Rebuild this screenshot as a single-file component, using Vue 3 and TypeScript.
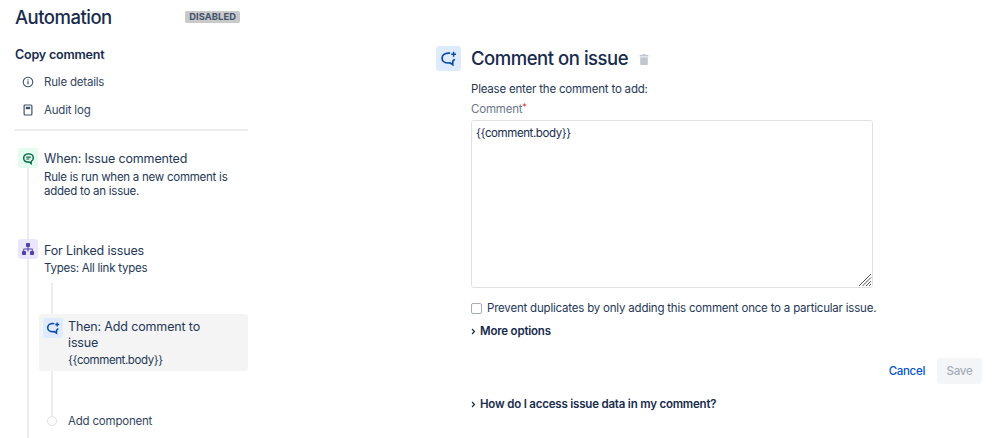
<script setup lang="ts">
const navItems = [
  { label: 'Rule details', icon: 'info' },
  { label: 'Audit log', icon: 'log' },
]
const bodyToken = '{{comment.body}\u007d'
</script>

<template>
  <div class="page">
    <aside class="sidebar">
      <div class="title-row">
        <h1>Automation</h1>
        <span class="lozenge">DISABLED</span>
      </div>
      <h2>Copy comment</h2>
      <ul class="nav">
        <li v-for="item in navItems" :key="item.label">
          <svg v-if="item.icon === 'info'" width="12" height="12" viewBox="0 0 12 12">
            <circle cx="6" cy="6" r="4.8" fill="none" stroke="#42526e" stroke-width="1.1" />
            <rect x="5.4" y="5.2" width="1.2" height="3.2" fill="#42526e" />
            <rect x="5.4" y="3.3" width="1.2" height="1.2" fill="#42526e" />
          </svg>
          <svg v-else width="12" height="12" viewBox="0 0 12 12">
            <rect x="2.1" y="1" width="7.8" height="10" rx="1" fill="none" stroke="#42526e" stroke-width="1.2" />
            <rect x="3.8" y="2.8" width="4.4" height="2.4" fill="#42526e" />
          </svg>
          <span>{{ item.label }}</span>
        </li>
      </ul>
      <div class="divider"></div>

      <div class="steps">
        <div class="step step-when">
          <div class="step-icon green">
            <svg width="13" height="13" viewBox="0 0 14 14" fill="none">
              <path d="M7 2C3.9 2 1.8 3.9 1.8 6.4c0 2.5 2.1 4.3 5 4.3h.9l2.2 1.7v-2.3c1.500-.7 2.300-2 2.300-3.700C12.200 3.900 10.100 2 7 2z" stroke="#006644" stroke-width="1.500" />
              <path d="M4.600 5.500h4.800M4.600 7.500h3.400" stroke="#006644" stroke-width="1.200" />
            </svg>
          </div>
          <div>
            <div class="step-title">When: Issue commented</div>
            <div class="step-desc">Rule is run when a new comment is added to an issue.</div>
          </div>
        </div>

        <div class="step step-branch">
          <div class="step-icon purple">
            <svg width="14" height="14" viewBox="0 0 14 14" fill="#5243aa">
              <rect x="5" y="1" width="4" height="4" rx=".8" />
              <rect x="1" y="9" width="4" height="4" rx=".8" />
              <rect x="9" y="9" width="4" height="4" rx=".8" />
              <path d="M6.500 4.500h1v2h3.500a.8.8 0 0 1 .8.8v2h-1V7.500H7.500v2h-1v-2H3.200v2h-1V7.300a.8.8 0 0 1 .8-.8h3.500z" />
            </svg>
          </div>
          <div>
            <div class="step-title">For Linked issues</div>
            <div class="step-desc">Types: All link types</div>
          </div>
        </div>

        <div class="nested">
          <div class="card">
            <div class="step-icon blue">
              <svg width="14" height="14" viewBox="0 0 14 14" fill="none">
                <path d="M8.300 2.600C8 2.500 7.500 2.500 7 2.500c-3 0-5.300 1.700-5.300 4.200 0 2.400 2.200 4 5 4 .5 0 1 0 1.500-.1l2.300 1.500V9.300c.7-.5 1.200-1.100 1.400-1.900" stroke="#0747a6" stroke-width="1.500" />
                <path d="M11.200 1.500v4M9.200 3.500h4" stroke="#0747a6" stroke-width="1.300" />
              </svg>
            </div>
            <div class="card-body">
              <div class="step-title">Then: Add comment to issue</div>
              <div class="step-desc token">{{ bodyToken }}</div>
            </div>
          </div>
          <div class="add-row">
            <span class="add-dot"></span>
            <span class="add-label">Add component</span>
          </div>
        </div>
      </div>
    </aside>

    <main class="main">
      <div class="header">
        <div class="header-icon">
          <svg width="17" height="17" viewBox="0 0 14 14" fill="none">
            <path d="M8.300 2.600C8 2.500 7.500 2.500 7 2.500c-3 0-5.300 1.700-5.300 4.200 0 2.400 2.200 4 5 4 .5 0 1 0 1.500-.1l2.300 1.500V9.300c.7-.5 1.200-1.100 1.400-1.900" stroke="#0747a6" stroke-width="1.400" />
            <path d="M11.200 1.500v4M9.200 3.500h4" stroke="#0747a6" stroke-width="1.200" />
          </svg>
        </div>
        <h3>Comment on issue</h3>
        <svg class="trash" width="10" height="11" viewBox="0 0 10 11" fill="#c1c7d0">
          <rect x="0.500" y="1" width="9" height="1.600" rx=".5" />
          <rect x="3.500" y="0" width="3" height="1.500" />
          <path d="M1.200 3.200h7.600v7a.8.8 0 0 1-.8.8H2a.8.8 0 0 1-.8-.8z" />
        </svg>
      </div>

      <div class="form">
        <p class="hint">Please enter the comment to add:</p>
        <label class="field-label">Comment<span class="req">*</span></label>
        <div class="textarea">
          <span class="token">{{ bodyToken }}</span>
          <svg class="resizer" width="14" height="14" viewBox="0 0 14 14" stroke="#555" stroke-width="1" fill="none">
            <path d="M1 13L13 1M4.500 13L13 4.500M8 13l5-5M11 13l2-2" />
          </svg>
        </div>
        <div class="check-row">
          <span class="checkbox"></span>
          <span class="check-label">Prevent duplicates by only adding this comment once to a particular issue.</span>
        </div>
        <div class="toggle more">
          <svg width="5" height="7" viewBox="0 0 5 7" fill="none"><path d="M1 1l2.500 2.500L1 6" stroke="#172b4d" stroke-width="1.200" /></svg>
          <span>More options</span>
        </div>
      </div>

      <div class="actions">
        <span class="cancel">Cancel</span>
        <span class="save">Save</span>
      </div>

      <div class="toggle help">
        <svg width="5" height="7" viewBox="0 0 5 7" fill="none"><path d="M1 1l2.500 2.500L1 6" stroke="#172b4d" stroke-width="1.200" /></svg>
        <span>How do I access issue data in my comment?</span>
      </div>
    </main>
  </div>
</template>

<style>
html, body {
  margin: 0;
  background: #fff;
  overflow: hidden;
}
</style>

<style scoped>
.page {
  display: flex;
  width: 999px;
  height: 438px;
  overflow: hidden;
  font-family: Inter, "Liberation Sans", sans-serif;
  color: #172b4d;
  font-size: 11.500px;
  letter-spacing: -0.2px;
  line-height: 14px;
}

.sidebar {
  width: 233px;
  margin-left: 15px;
  flex: none;
}

.title-row {
  display: flex;
  align-items: center;
  justify-content: space-between;
  height: 34px;
  padding-right: 8px;
}

h1 {
  margin: 0;
  font-size: 18.500px;
  font-weight: 500;
  letter-spacing: -0.5px;
  color: #172b4d;
}

.lozenge {
  background: #c9c9c9;
  color: #42526e;
  font-size: 9.300px;
  font-weight: 700;
  line-height: 12px;
  padding: 0 4px;
  border-radius: 2px;
  letter-spacing: 0.1px;
}

h2 {
  margin: 13px 0 0;
  font-size: 12.500px;
  line-height: 16px;
  font-weight: 600;
}

.nav {
  list-style: none;
  margin: 5px 0 0;
  padding: 0;
}

.nav li {
  display: flex;
  align-items: center;
  height: 28px;
  gap: 10px;
  padding-left: 7px;
  color: #344563;
}

.divider {
  height: 2px;
  background: #ebecf0;
  margin-top: 5px;
}

.steps {
  position: relative;
  padding-top: 17px;
}

.steps::before {
  content: "";
  position: absolute;
  left: 12px;
  top: 30px;
  bottom: -100px;
  width: 2px;
  background: #ebecf0;
}

.step {
  position: relative;
  display: flex;
  gap: 6px;
  padding-left: 3px;
}

.step-icon {
  position: relative;
  flex: none;
  width: 20px;
  height: 20px;
  border-radius: 3px;
  display: flex;
  align-items: center;
  justify-content: center;
}

.green { background: #e3fcef; }
.purple { background: #eae6ff; }
.blue { background: #deebff; }

.step-title {
  font-size: 12.500px;
  line-height: 16px;
  letter-spacing: -0.15px;
  color: #253858;
  margin-top: 3px;
}

.step-desc {
  margin-top: 3px;
  font-size: 11.500px;
  letter-spacing: -0.25px;
  color: #253858;
}

.token {
  letter-spacing: -0.4px;
}

.step-when {
  height: 91px;
}

.step-branch {
  height: 75px;
}

.step-branch .step-title {
  margin-top: 4px;
}

.step-branch .step-desc {
  margin-top: 2px;
}

.nested {
  position: relative;
  margin-left: 24px;
}

.nested::before {
  content: "";
  position: absolute;
  left: 12px;
  top: -31px;
  bottom: 12px;
  width: 2px;
  background: #ebecf0;
}

.card {
  position: relative;
  display: flex;
  gap: 5px;
  background: #f4f4f4;
  border-radius: 3px;
  padding: 4px;
  height: 49px;
}

.card-body {
  width: 150px;
}

.card .step-title {
  margin-top: 1px;
}

.card .step-desc {
  margin-top: 2px;
}

.add-row {
  position: relative;
  display: flex;
  align-items: center;
  gap: 11px;
  margin-top: 43px;
  padding-left: 8px;
  height: 14px;
}

.add-dot {
  width: 10px;
  height: 10px;
  border-radius: 50%;
  background: #fff;
  border: 1px solid #dfe1e6;
  box-sizing: border-box;
}

.add-label {
  color: #344563;
}

.main {
  flex: 1;
  padding: 46px 17px 0 188px;
}

.header {
  display: flex;
  align-items: center;
  height: 25px;
}

.header-icon {
  width: 25px;
  height: 25px;
  border-radius: 3px;
  background: #deebff;
  display: flex;
  align-items: center;
  justify-content: center;
}

h3 {
  margin: 0 0 0 10px;
  font-size: 18.500px;
  line-height: 25px;
  font-weight: 500;
  letter-spacing: -0.47px;
  color: #172b4d;
}

.trash {
  margin: 2px 0 0 11px;
}

.form {
  margin-left: 35px;
  width: 402px;
}

.hint {
  margin: 11px 0 0;
  line-height: 14px;
  color: #253858;
}

.field-label {
  display: block;
  margin-top: 6px;
  color: #6b778c;
  line-height: 14px;
}

.req {
  color: #de350b;
  font-size: 9px;
  vertical-align: 3px;
  line-height: 0;
}

.textarea {
  position: relative;
  box-sizing: border-box;
  margin-top: 4px;
  height: 168px;
  border: 1px solid #dfe1e6;
  border-radius: 3px;
  padding: 5px 4px;
  color: #172b4d;
}

.resizer {
  position: absolute;
  right: 0;
  bottom: 0;
}

.check-row {
  display: flex;
  align-items: center;
  gap: 5px;
  margin-top: 13px;
  height: 14px;
  white-space: nowrap;
}

.checkbox {
  flex: none;
  box-sizing: border-box;
  width: 11px;
  height: 11px;
  border: 1px solid #a5adba;
  border-radius: 2px;
}

.check-label {
  color: #253858;
}

.toggle {
  display: flex;
  align-items: center;
  gap: 4px;
  font-weight: 600;
  color: #172b4d;
}

.more {
  margin-top: 9px;
  height: 14px;
}

.actions {
  display: flex;
  justify-content: flex-end;
  align-items: center;
  gap: 12px;
  margin-top: 20px;
}

.cancel {
  color: #0052cc;
  font-weight: 500;
  letter-spacing: -0.3px;
}

.save {
  width: 45px;
  height: 26px;
  line-height: 26px;
  text-align: center;
  background: #f4f5f7;
  color: #a5adba;
  border-radius: 3px;
  font-weight: 500;
}

.help {
  margin: 13px 0 0 35px;
  height: 14px;
}
</style>
